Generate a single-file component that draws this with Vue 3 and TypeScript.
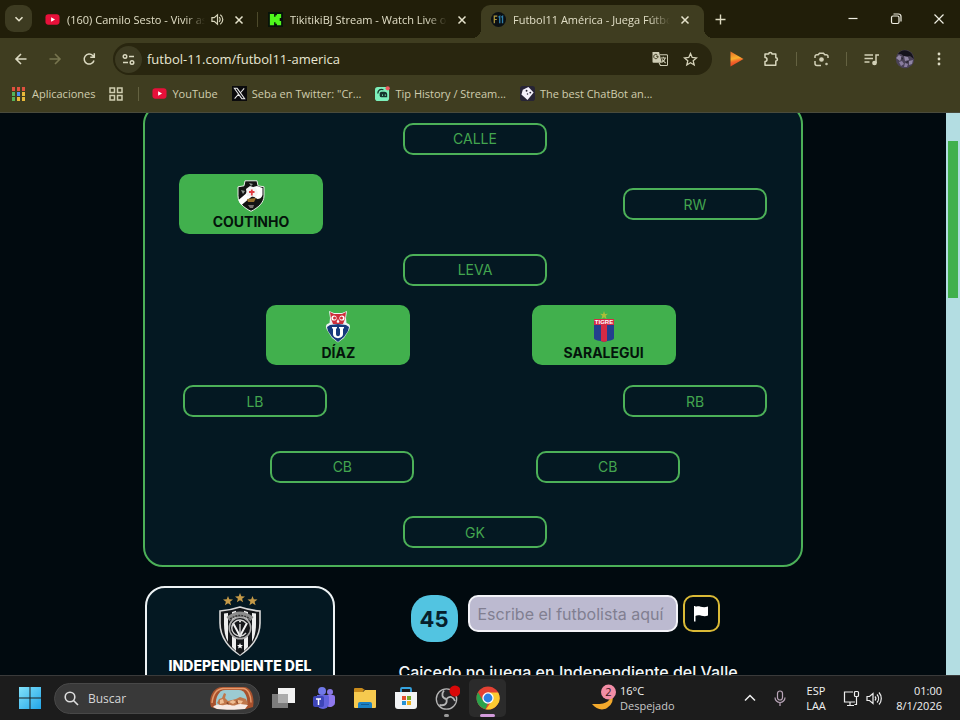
<script setup lang="ts">
import { ref } from 'vue'

interface Slot {
  label: string
  crest?: 'vasco' | 'uchile' | 'tigre'
}
interface Row {
  spread: 'single' | 'wide' | 'narrow'
  slots: Slot[]
}
interface Tab {
  title: string
  icon: 'youtube' | 'kick' | 'f11'
  audio?: boolean
  active?: boolean
}
interface Bookmark {
  label: string
  icon: 'youtube' | 'x' | 'tip' | 'dice'
}

const rows: Row[] = [
  { spread: 'single', slots: [{ label: 'CALLE' }] },
  { spread: 'wide', slots: [{ label: 'COUTINHO', crest: 'vasco' }, { label: 'RW' }] },
  { spread: 'single', slots: [{ label: 'LEVA' }] },
  { spread: 'narrow', slots: [{ label: 'DÍAZ', crest: 'uchile' }, { label: 'SARALEGUI', crest: 'tigre' }] },
  { spread: 'wide', slots: [{ label: 'LB' }, { label: 'RB' }] },
  { spread: 'narrow', slots: [{ label: 'CB' }, { label: 'CB' }] },
  { spread: 'single', slots: [{ label: 'GK' }] },
]

const tabs: Tab[] = [
  { title: '(160) Camilo Sesto - Vivir as', icon: 'youtube', audio: true },
  { title: 'TikitikiBJ Stream - Watch Live on', icon: 'kick' },
  { title: 'Futbol11 América - Juega Fútbo', icon: 'f11', active: true },
]

const bookmarks: Bookmark[] = [
  { label: 'YouTube', icon: 'youtube' },
  { label: 'Seba en Twitter: "Cr...', icon: 'x' },
  { label: 'Tip History / Stream...', icon: 'tip' },
  { label: 'The best ChatBot an...', icon: 'dice' },
]

const appColors = ['#e0513f', '#e0513f', '#e0513f', '#53b35a', '#4b8df0', '#e8b93a', '#53b35a', '#e8b93a', '#e8b93a']
const player = ref('')
const search = ref('')
const url = ref('futbol-11.com/futbol11-america')
</script>

<template>
  <div class="desktop">
    <header class="browser">
      <div class="tabstrip">
        <button class="tab-search" aria-label="Buscar pestañas">
          <svg width="10" height="10" viewBox="0 0 10 10"><path d="M1.500 3.200 5 6.700l3.500-3.500" fill="none" stroke="#e6e3cc" stroke-width="1.600" /></svg>
        </button>
        <div v-for="tab in tabs" :key="tab.title" class="tab" :class="{ active: tab.active }">
          <svg v-if="tab.icon === 'youtube'" class="favicon" viewBox="0 0 16 16">
            <rect x="0.500" y="2.500" width="15" height="11" rx="3" fill="#e8103a" /><path d="M6.500 5.500v5l4.200-2.500z" fill="#fff" />
          </svg>
          <svg v-else-if="tab.icon === 'kick'" class="favicon" viewBox="0 0 16 16">
            <rect width="16" height="16" fill="#07130a" /><path d="M2 2h4.500v3H8V3.500h1.500V2H14v4.500h-1.500V9.500H14V14H9.500v-1.500H8V11H6.500v3H2z" fill="#4ff81c" />
          </svg>
          <svg v-else class="favicon" viewBox="0 0 16 16">
            <circle cx="8" cy="8" r="8" fill="#0b1014" />
            <path d="M3.500 12V4.500h3.200M3.500 8h2.700" fill="none" stroke="#b09a3e" stroke-width="1.300" />
            <path d="M8 5.500 9.300 4.500V12M11 5.500l1.300-1V12" fill="none" stroke="#2f7fa8" stroke-width="1.400" />
          </svg>
          <span class="tab-title">{{ tab.title }}</span>
          <svg v-if="tab.audio" class="audio" viewBox="0 0 14 14" fill="none" stroke="#d8d5bb" stroke-width="1.300">
            <path d="M1 5h2.500L7 2v10L3.500 9H1z" /><path d="M8.800 4.500a3.500 3.500 0 0 1 0 5M10 2a6 6 0 0 1 0 10" />
          </svg>
          <button class="close" aria-label="Cerrar pestaña">
            <svg width="10" height="10" viewBox="0 0 10 10"><path d="m1.500 1.500 7 7m0-7-7 7" stroke="#e6e3cc" stroke-width="1.500" /></svg>
          </button>
        </div>
        <button class="new-tab" aria-label="Nueva pestaña">
          <svg width="11" height="11" viewBox="0 0 11 11"><path d="M5.500.5v10M.5 5.500h10" stroke="#dedbc2" stroke-width="1.400" /></svg>
        </button>
        <div class="window-controls">
          <button aria-label="Minimizar"><svg width="12" height="12" viewBox="0 0 12 12"><path d="M1.500 5.500h9" stroke="#efeee2" stroke-width="1.200" /></svg></button>
          <button aria-label="Restaurar"><svg width="12" height="12" viewBox="0 0 12 12" fill="none" stroke="#efeee2" stroke-width="1.200"><rect x="1.500" y="3" width="7.500" height="7.500" rx="1.500" /><path d="M3.500 1h5A2.500 2.500 0 0 1 11 3.500v5" /></svg></button>
          <button aria-label="Cerrar"><svg width="12" height="12" viewBox="0 0 12 12"><path d="m1.500 1.500 9 9m0-9-9 9" stroke="#efeee2" stroke-width="1.200" /></svg></button>
        </div>
      </div>

      <div class="toolbar">
        <button class="tool" aria-label="Atrás"><svg width="14" height="14" viewBox="0 0 14 14" fill="none" stroke="#dcdac2" stroke-width="1.600"><path d="M12.500 7H2M7 2 2 7l5 5" /></svg></button>
        <button class="tool" aria-label="Adelante"><svg width="14" height="14" viewBox="0 0 14 14" fill="none" stroke="#77754f" stroke-width="1.600"><path d="M1.500 7H12M7 2l5 5-5 5" /></svg></button>
        <button class="tool" aria-label="Recargar"><svg width="14" height="14" viewBox="0 0 14 14" fill="none" stroke="#dcdac2" stroke-width="1.500"><path d="M12 8.500A5 5 0 1 1 10.800 3.600L12 5M12.300 1.300v4H8.300" /></svg></button>
        <div class="omnibox">
          <button class="site-info" aria-label="Información del sitio">
            <svg width="13" height="13" viewBox="0 0 13 13" fill="none" stroke="#dcdac2" stroke-width="1.400"><circle cx="3" cy="3.500" r="1.800" /><path d="M7 3.500h5M1 9.500h5" /><circle cx="10" cy="9.500" r="1.800" /></svg>
          </button>
          <input v-model="url" aria-label="Dirección" />
          <button class="pill-icon" aria-label="Traducir">
            <svg width="16" height="16" viewBox="0 0 17 16">
              <path d="M1 .5h6.500L10.500 12H1.500A1 1 0 0 1 .5 11V1z" fill="#cfcdb5" />
              <path d="M6.500 5H4.300M6.400 5A2.300 2.300 0 1 1 5.500 3.500" fill="none" stroke="#343114" stroke-width="1" />
              <path d="M8.500 3.500h7a1 1 0 0 1 1 1V14a1 1 0 0 1-1 1H9L7.500 12M9.500 7h5.500M12 5.500V7M14 7c-.5 2-2 3.500-3.500 4.500M10.500 8.500l4 4" fill="none" stroke="#cfcdb5" stroke-width="1.100" />
            </svg>
          </button>
          <button class="pill-icon" aria-label="Favorito">
            <svg width="15" height="15" viewBox="0 0 15 15"><path d="m7.500 1.500 1.700 4 4.300.4-3.300 2.900 1 4.200-3.700-2.200L3.800 13l1-4.200L1.500 5.900l4.300-.4z" fill="none" stroke="#d5d2b9" stroke-width="1.300" /></svg>
          </button>
        </div>
        <button class="tool" aria-label="Extensión de video">
          <svg width="14" height="16" viewBox="0 0 14 16"><defs><linearGradient id="vid" x1="0.300" y1="0" x2="0.500" y2="1"><stop offset="0" stop-color="#e8702a" /><stop offset="0.450" stop-color="#fbb02c" /><stop offset="0.650" stop-color="#f2662a" /><stop offset="1" stop-color="#e23c22" /></linearGradient></defs><path d="M.5.500 13.500 8 .5 15.500z" fill="url(#vid)" /></svg>
        </button>
        <button class="tool" aria-label="Extensiones">
          <svg width="16" height="16" viewBox="0 0 16 16"><path d="M2 3h3.700a1.600 1.600 0 0 1 3.200 0h3.900v3.700a1.600 1.600 0 0 1 0 3.200v4.300H2V10.500a2 2 0 0 0 0-4z" fill="none" stroke="#d8d6bc" stroke-width="1.500" stroke-linejoin="round" /></svg>
        </button>
        <i class="divider"></i>
        <button class="tool" aria-label="Lens">
          <svg width="15" height="15" viewBox="0 0 15 15" fill="none" stroke="#d3d1b7" stroke-width="1.500"><path d="M1 6V4.500A1.800 1.800 0 0 1 2.800 2.700h1.400L5.500 1.200h4l1.300 1.500h1.400A1.800 1.800 0 0 1 14 4.500V6M1 9v2.500a2 2 0 0 0 2 2h4" /><circle cx="7.500" cy="7.500" r="1.600" fill="#d3d1b7" /><circle cx="12.500" cy="12" r=".5" /></svg>
        </button>
        <i class="divider"></i>
        <button class="tool" aria-label="Control de medios">
          <svg width="15" height="13" viewBox="0 0 15 13" fill="none" stroke="#d3d1b7" stroke-width="1.500"><path d="M.5 2h8.500M.5 5.500h8.500M.5 9h5M12 10V2h3" /><circle cx="10.500" cy="10" r="1.600" fill="#d3d1b7" /></svg>
        </button>
        <button class="tool" aria-label="Perfil">
          <svg width="20" height="20" viewBox="0 0 20 20">
            <circle cx="10" cy="10" r="9.200" fill="#4a4256" /><path d="M3 5c3-5 10-5 14 0l2 5-4-3-5 1-4-3z" fill="#15131c" />
            <path d="m1 9 3-3 3 2-2 4zM9 7l4 1 1 3-4 1zM14 12l4-1-1 4-3 1z" fill="#9085a3" /><path d="m6 8 2 1-1 2zM12 12l2 1-3 1z" fill="#201c29" /><path d="m4 13 3-1 2 3-3 2zM10 14l3 1-1 3-3 0z" fill="#8a7da0" />
          </svg>
        </button>
        <button class="tool" aria-label="Menú"><svg width="4" height="14" viewBox="0 0 4 14" fill="#dcdac2"><circle cx="2" cy="2" r="1.400" /><circle cx="2" cy="7" r="1.400" /><circle cx="2" cy="12" r="1.400" /></svg></button>
      </div>

      <nav class="bookmarks">
        <a href="#" class="bookmark apps">
          <svg width="14" height="14" viewBox="0 0 14 14"><rect v-for="(c, i) in appColors" :key="i" :x="(i % 3) * 5" :y="Math.floor(i / 3) * 5" width="3" height="4" :fill="c" /></svg>
          Aplicaciones
        </a>
        <a href="#" class="bookmark grid-link" aria-label="Grupos">
          <svg width="14" height="14" viewBox="0 0 14 14" fill="none" stroke="#cfcdb0" stroke-width="1.500"><path d="M1 1h4.500v4.500H1zM8.500 1H13v4.500H8.500zM1 8.500h4.500V13H1zM8.500 8.500H13V13H8.500z" /></svg>
        </a>
        <i class="divider"></i>
        <a v-for="b in bookmarks" :key="b.label" href="#" class="bookmark">
          <svg v-if="b.icon === 'youtube'" class="favicon" viewBox="0 0 16 16"><rect x="0.500" y="2.500" width="15" height="11" rx="3" fill="#e8103a" /><path d="M6.500 5.500v5l4.200-2.500z" fill="#fff" /></svg>
          <svg v-else-if="b.icon === 'x'" class="favicon" viewBox="0 0 16 16"><rect width="16" height="16" fill="#0a0a0c" /><path d="M2.500 2.500h3l8 11h-3zM13 2.500 9 7.200M6.800 9 2.800 13.500" fill="none" stroke="#e8e8e8" stroke-width="1.100" /></svg>
          <svg v-else-if="b.icon === 'tip'" class="favicon" viewBox="0 0 16 16"><rect y="1" width="15" height="15" rx="3" fill="#7df0bb" /><path d="M3 8c0-4 3-5 6-4" fill="none" stroke="#16352d" stroke-width="1.400" /><path d="M5 8q0-2 2-2h3q3 0 3 3v3H7q-2 0-2-2z" fill="#16352d" /><path d="M8 9v1.500M11 9v1.500" stroke="#7df0bb" /><circle cx="13.500" cy="2.500" r="2.300" fill="#ee5960" /></svg>
          <svg v-else class="favicon" viewBox="0 0 16 16"><rect width="16" height="16" rx="3" fill="#272435" /><path d="m9 1 5.500 6L8 15 1.500 9 3 4z" fill="#f4f1fb" /><g fill="#272435"><circle cx="7" cy="5" r="1" /><circle cx="11" cy="7" r="1" /><circle cx="8" cy="8.500" r=".8" /></g></svg>
          {{ b.label }}
        </a>
      </nav>
    </header>

    <div class="viewport">
      <main class="page">
        <section class="pitch">
          <div v-for="(row, r) in rows" :key="r" class="row" :class="row.spread">
            <button v-for="(slot, s) in row.slots" :key="s" class="slot" :class="{ filled: slot.crest }">
              <svg v-if="slot.crest === 'vasco'" class="crest" viewBox="0 0 28 32">
                <path d="M8 .8h12l1 5 6 1v9c0 7-6 12-13 15.500C7 27.800 1 22.800 1 15.800v-9l6-1z" fill="#131313" stroke="#e8f0e8" stroke-width="1" />
                <path d="m20 6 5.500 2v7c-1 3-3 4-5 4l-5-3-5 4-6 5c-2-2-3-4-3-5l7-6 4-6z" fill="#fff" />
                <path d="m9 9 4-3 6 2 2 5-2 4-9-1z" fill="#f4f4f4" /><path d="M12 12h5.500M14.800 9.500v6" stroke="#e13b42" stroke-width="1.800" />
                <path d="m10 19 9-1-2 4h-6z" fill="#98712e" /><path d="m11 25 2 3h3l1-3z" fill="#77706e" /><path d="m4 10 4 1-2 3zM12 3l4 1-2 2z" fill="#8d9690" />
              </svg>
              <svg v-else-if="slot.crest === 'uchile'" class="crest" viewBox="0 0 28 32">
                <path d="M5 0 10 2h8l5-2-1 7 .5 5C26 13 27 15 25 19l-5 8-6 4.500L8 27l-5-8c-2-4-1-6 2.500-7L6 7z" fill="#eef2f4" />
                <path d="m6 1 4 2h8l4-2-1 7-2 5H9L7 8z" fill="#ce2e3b" /><circle cx="10" cy="7" r="2.600" fill="#fff" /><circle cx="18" cy="7" r="2.600" fill="#fff" />
                <circle cx="10.500" cy="7" r="1.500" fill="#ce2e3b" /><circle cx="17.500" cy="7" r="1.500" fill="#ce2e3b" /><path d="m14 8 1.500 3-1.500 1-1.500-1z" fill="#fff" />
                <path d="m6 14 8-1 8 1 3 2-1 4-4 6-6 5-6-5-4-6-1-4z" fill="#173a7c" /><path d="M8 16h5v1.500h-1V23c0 3 4 3 4 0v-5.500h-1V16h5v1.500h-1V23c0 5.500-10 5.500-10 0v-5.500H8z" fill="#fff" />
              </svg>
              <svg v-else-if="slot.crest === 'tigre'" class="crest" viewBox="0 0 28 32">
                <path d="m14 0 1 3 3-.2-2.300 2L16.500 8 14 6.200 11.500 8l.8-3.200-2.300-2 3 .2z" fill="#aabd38" />
                <path d="M4 9h20v18c0 3-6 2-10 4-4-2-10-1-10-4z" fill="#233f8e" /><path d="M11 14h6v16l-3 1-3-1z" fill="#d62a45" /><path d="M4 8h20v6H4z" fill="#d62a45" />
                <text x="14" y="13" text-anchor="middle" font-family="Liberation Sans, sans-serif" font-size="6" font-weight="700" fill="#fff">TIGRE</text>
              </svg>
              <span>{{ slot.label }}</span>
            </button>
          </div>
        </section>

        <section class="play">
          <article class="club">
            <svg class="club-crest" viewBox="0 0 44 65">
              <g fill="#c59a48"><path d="m22 0 1.300 3.300 3.700.2-2.900 2.200 1 3.600L22 7.200l-3.100 2.100 1-3.600L17 3.500l3.700-.2z" /><path d="m10 3 1.300 3.300 3.700.2-2.900 2.200 1 3.600-3.100-2.100-3.100 2.100 1-3.600L5 6.500l3.700-.2z" /><path d="m34.500 3 1.300 3.300 3.700.2-2.900 2.200 1 3.600-3.100-2.100-3.100 2.100 1-3.600-2.900-2.200 3.700-.2z" /></g>
              <path d="M2 18c7-.5 14-2 20-4 6 2 13 3.500 20 4v12c0 15-10 26-20 32C12 56 2 45 2 30z" fill="#15171a" stroke="#dadada" stroke-width="1.600" />
              <path d="M6 20.500 10 20v29c-3-5-4-12-4-18zM14 19l4-1.300V58l-4-4zM26 17.700l4 1.300v35l-4 4zM34 20l4 .5V31c0 6-1 13-4 18z" fill="#eee" />
              <path d="M10 26q12-10 24 0" fill="none" stroke="#8c8c8c" stroke-width="5" /><path d="M12 26q10-7 20 0" fill="none" stroke="#333" stroke-width="1.500" stroke-dasharray="2 1" />
              <circle cx="22" cy="35" r="11.500" fill="#aaa" /><circle cx="22" cy="35" r="10" fill="#15171a" />
              <path d="m15 30 7 13 7-13" fill="none" stroke="#f2f2f2" stroke-width="2" /><path d="M22 31v11M28 40a8 8 0 1 1 0-10" fill="none" stroke="#d5d5d5" stroke-width="1.400" /><circle cx="22" cy="28.500" r="1" fill="#eee" />
              <path d="M18 49h8v9l-4 4-4-4z" fill="#15171a" /><path d="m22 50 .8 2h2.200l-1.700 1.400.7 2.200-2-1.200-2 1.200.7-2.200L19 52h2.200z" fill="#fff" />
            </svg>
            <h2>INDEPENDIENTE DEL VALLE</h2>
          </article>
          <div class="guess">
            <form class="guess-row" @submit.prevent>
              <output class="timer">45</output>
              <input v-model="player" class="player" placeholder="Escribe el futbolista aquí" aria-label="Futbolista" />
              <button class="flag" type="button" aria-label="Rendirse">
                <svg width="16" height="17" viewBox="0 0 16 17"><path d="M1 1h1.500v15.500H1z" fill="#fff" /><path d="M2 2c4-2 7 1.500 13-.5v9C10 12.500 7 9 2 11z" fill="#fff" /></svg>
              </button>
            </form>
            <p class="message">Caicedo no juega en Independiente del Valle</p>
          </div>
        </section>
      </main>
      <div class="scrollbar"><i></i></div>
    </div>

    <footer class="taskbar">
      <button class="start" aria-label="Inicio">
        <svg width="22" height="22" viewBox="0 0 22 22"><defs><linearGradient id="win" x1="0" y1="0" x2="1" y2="1"><stop offset="0" stop-color="#82e2fb" /><stop offset="1" stop-color="#22a5e8" /></linearGradient></defs><path d="M0 0h10.500v10.500H0zM11.500 0H22v10.500H11.500zM0 11.500h10.500V22H0zM11.500 11.500H22V22H11.500z" fill="url(#win)" /></svg>
      </button>
      <label class="search">
        <svg width="15" height="15" viewBox="0 0 15 15" fill="none" stroke="#dedede" stroke-width="1.600"><circle cx="6" cy="6" r="4.800" /><path d="m9.500 9.500 4.500 4.500" /></svg>
        <input v-model="search" placeholder="Buscar" aria-label="Buscar" />
        <svg width="46" height="24" viewBox="0 0 46 24">
          <path d="M2 21C-1 12 4 1 13 1h22c7 0 11 10 9 20l-7 2H8z" fill="#a8512d" /><path d="M3 17C4 8 8 3 14 2.500h20c5 0 8 7 8 14" fill="none" stroke="#e59a6c" stroke-width="1.500" />
          <path d="M7 19c-1-7 3-15 9-15h14c6 0 9 8 8 14l-5 3H12z" fill="#9ccbd2" /><path d="m8 17 2-4 3-1 2-5 2 1-1 4 3 3 8-2 4-2 6 2 2 5-8 3H13z" fill="#c0764a" /><path d="m11 14 3-1 1 4-4 1zM20 16l4-2 3 2-3 2zM29 14l5 1-2 3-3-1z" fill="#f0bd93" /><path d="m17 17 2-1 1 3zM27 14l1 4 1-1z" fill="#7d3d25" />
          <path d="M4 21c4-4 8-1 11-2 5-2 8 2 12 0 5-2 8 0 12 0l-3 4c-9 1-20 1-28 0z" fill="#f7e9e4" />
        </svg>
      </label>
      <button class="app" aria-label="Vista de tareas"><svg width="24" height="24" viewBox="0 0 24 24"><rect x="7" y="2" width="17" height="15" fill="#f2f2f2" /><rect x="1" y="8" width="16" height="14" fill="#7c7c7c" /><rect x="7" y="8" width="10" height="9" fill="#ababab" /></svg></button>
      <button class="app" aria-label="Teams">
        <svg width="24" height="24" viewBox="0 0 24 24"><circle cx="10" cy="5" r="4" fill="#7078e8" /><circle cx="18" cy="6" r="3" fill="#8a79e5" /><path d="M14 9h7q2 0 2 2v6a5 5 0 0 1-8 3z" fill="#8e78ed" /><path d="M5 9h10q2 0 2 2v6a6 6 0 0 1-12 0z" fill="#6263dd" /><rect x="1" y="10" width="11" height="11" rx="2" fill="#3d45b8" /><path d="M4 13h5M6.500 13v6" stroke="#fff" stroke-width="1.500" /></svg>
      </button>
      <button class="app" aria-label="Explorador de archivos">
        <svg width="24" height="24" viewBox="0 0 24 24"><path d="M1 3q0-1 1-1h7l3 2h-1L9 7H1z" fill="#c98b1b" /><path d="M1 6h9l2-2h11v17q0 1-1 1H2q-1 0-1-1z" fill="#f6ca4f" /><path d="M5 22v-4q0-2 2-2h10q2 0 2 2v4z" fill="#1b81c5" /><path d="M8 18h8v1H8z" fill="#145c91" /></svg>
      </button>
      <button class="app" aria-label="Microsoft Store">
        <svg width="24" height="24" viewBox="0 0 24 24"><path d="M7 6V3q0-1 1-1h8q1 0 1 1v3" fill="none" stroke="#35a3df" stroke-width="1.800" /><path d="M1 6h22v14q0 3-3 3H4q-3 0-3-3z" fill="#f2f4f5" /><path d="M8 10h4v4H8z" fill="#e2502f" /><path d="M13 10h4v4h-4z" fill="#77ac29" /><path d="M8 15h4v4H8z" fill="#2793d5" /><path d="M13 15h4v4h-4z" fill="#edb21f" /></svg>
      </button>
      <button class="app running" aria-label="OBS Studio">
        <svg width="26" height="26" viewBox="0 0 26 26"><circle cx="12.500" cy="14" r="10.200" fill="#252527" stroke="#b5b5b5" stroke-width="1.300" /><g fill="none" stroke="#b5b5b5" stroke-width="1.800"><path d="M12.500 14C8 13 7 9 10 5.500" /><path d="M12.500 14c3-4 7-2 8.500 2" /><path d="M12.500 14c1 5-2 7-7 6" /></g><circle cx="21" cy="6" r="5.500" fill="#d80808" /></svg>
      </button>
      <button class="app current" aria-label="Chrome">
        <svg width="24" height="24" viewBox="0 0 24 24"><circle cx="12" cy="12" r="11.500" fill="#e34133" /><path d="M2 6.300 7.200 15 12 17l-2.500 6.200A11.500 11.500 0 0 1 2 6.300z" fill="#2ba24c" /><path d="M12 6.500h10.200A11.500 11.500 0 0 1 9.800 23.300L16.700 14z" fill="#fcca31" /><circle cx="12" cy="12" r="5.700" fill="#fff" /><circle cx="12" cy="12" r="4.400" fill="#2c7fe4" /></svg>
      </button>
      <button class="weather">
        <svg width="26" height="28" viewBox="0 0 26 28"><path d="M18 9q5 12-17 11c4 5 10 7 15 4q8-5 5-15z" fill="#f2a92c" /><circle cx="17.500" cy="8" r="7.500" fill="#f28da5" /><text x="17.500" y="12" text-anchor="middle" font-family="Open Sans, sans-serif" font-size="11" fill="#35151e">2</text></svg>
        <span class="two-line"><span>16°C</span><span class="dim">Despejado</span></span>
      </button>
      <div class="tray">
        <button class="tray-icon" aria-label="Mostrar iconos ocultos"><svg width="12" height="8" viewBox="0 0 12 8"><path d="M1 6.500 6 1.500l5 5" fill="none" stroke="#eee" stroke-width="1.500" /></svg></button>
        <button class="tray-icon" aria-label="Micrófono"><svg width="12" height="16" viewBox="0 0 12 16" fill="none" stroke="#b9a5b8" stroke-width="1.200"><rect x="3.500" y="1" width="5" height="9" rx="2.500" /><path d="M1 7.500a5 5 0 0 0 10 0M6 12.500V16" /></svg></button>
        <button class="two-line lang"><span>ESP</span><span>LAA</span></button>
        <button class="status" aria-label="Red y volumen">
          <svg width="17" height="17" viewBox="0 0 17 17" fill="none" stroke="#eee" stroke-width="1.200"><path d="M10 2H1.500v10H12M4 15.500h7M7 12.500v3" /><rect x="11.500" y="1.500" width="4" height="5" rx="1" /><path d="M13.500 6.500v8h-2" /></svg>
          <svg width="17" height="17" viewBox="0 0 17 17" fill="none" stroke="#eee" stroke-width="1.200"><path d="M1 6.500h2.500L7 3.500v10l-3.500-3H1zM9 6.500a3 3 0 0 1 0 4M11 4.500a6 6 0 0 1 0 8M13 2.500a9 9 0 0 1 0 12" /></svg>
        </button>
        <button class="two-line clock"><span>01:00</span><span>8/1/2026</span></button>
      </div>
    </footer>
  </div>
</template>

<style>
html, body { margin: 0; background: #010a0f; }
</style>

<style scoped>
* { box-sizing: border-box; }
svg { display: block; flex: none; }
button, input { font: inherit; color: inherit; background: none; border: 0; padding: 0; margin: 0; min-width: 0; }
button { display: flex; align-items: center; justify-content: center; flex: none; }
input { outline: none; }
a { color: inherit; text-decoration: none; }

.desktop { display: flex; flex-direction: column; height: 100vh; overflow: hidden; font-family: "Open Sans", "Noto Sans", sans-serif; font-size: 11px; color: #e0ddc5; }

.browser { flex: none; background: #3f3d20; border-bottom: 1px solid #4a4b3c; }
.tabstrip { display: flex; height: 38px; background: #211e09; align-items: flex-start; }
.tab-search { width: 27px; height: 27px; margin: 5px 3px 0 5px; border-radius: 9px; background: #3d3b21; }
.tab { display: flex; align-items: center; flex: 0 1 223px; min-width: 0; height: 33px; margin-top: 5px; padding: 0 14px 4px 10px; border-radius: 9px 9px 0 0; position: relative; }
.tab:nth-of-type(1)::after { content: ""; position: absolute; right: 0; top: 7px; width: 1px; height: 15px; background: #4d4a2b; }
.tab.active { background: #3f3d20; }
.tab.active::before, .tab.active::after { content: ""; position: absolute; bottom: 0; width: 9px; height: 9px; }
.tab.active::before { left: -9px; background: radial-gradient(circle at 0 0, #211e09 9px, #3f3d20 9px); }
.tab.active::after { right: -9px; background: radial-gradient(circle at 100% 0, #211e09 9px, #3f3d20 9px); }
.favicon { width: 15px; height: 15px; }
.tab-title { flex: 1; min-width: 0; margin: 0 10px 0 7px; white-space: nowrap; overflow: hidden; mask-image: linear-gradient(90deg, #000 calc(100% - 20px), transparent); }
.audio { width: 13px; height: 13px; margin-left: -4px; margin-right: 10px; }
.close { width: 10px; height: 16px; }
.new-tab { width: 28px; height: 28px; margin: 5px 0 0 2px; }
.window-controls { display: flex; margin-left: auto; }
.window-controls button { width: 43px; height: 38px; }

.toolbar { display: flex; align-items: center; height: 42px; padding: 0 4px; }
.tool { width: 34px; height: 32px; }
.omnibox { flex: 1; min-width: 0; display: flex; align-items: center; height: 32px; margin: 0 8px 0 7px; padding: 0 7px 0 2px; border-radius: 16px; background: #29260f; }
.site-info { width: 27px; height: 27px; border-radius: 50%; background: #3d3b22; }
.omnibox input { flex: 1; margin-left: 5px; font-size: 13px; color: #e8e6d3; }
.pill-icon { width: 30px; height: 28px; }
.divider { flex: none; width: 16px; height: 14px; background: linear-gradient(#646241, #646241) center / 1px 100% no-repeat; }

.bookmarks { display: flex; align-items: center; height: 32px; padding: 0 12px 5px; }
.bookmark { display: flex; align-items: center; gap: 5px; margin-right: 14px; white-space: nowrap; color: #d0cdae; }
.apps { gap: 6px; }
.grid-link { margin-right: 7px; }
.bookmarks .divider { margin-right: 6px; }

.viewport { flex: 1; min-height: 0; display: flex; overflow: hidden; background: #010a0f; }
.page { flex: 1; min-width: 0; overflow: hidden; font-family: Inter, sans-serif; }
.pitch { display: grid; grid-template-rows: repeat(7, 1fr); width: min(100%, 660px); height: 463px; margin: -9px auto 0; padding-left: 4px; border: 2px solid #4cb058; border-radius: 20px; background: #041822; }
.row { display: flex; align-items: center; justify-content: center; }
.row.wide { justify-content: space-between; padding: 0 34px; }
.row.narrow { justify-content: space-evenly; }
.slot { width: 144px; height: 32px; border: 2px solid #4cb058; border-radius: 10px; font-size: 14px; color: #43a54f; }
.slot.filled { flex-direction: column; height: 60px; margin: 0 4px 0 -4px; border: 0; background: #41b04d; color: #04140b; font-weight: 700; line-height: 20px; padding-top: 3px; }
.crest { width: 28px; height: 32px; }

.play { display: flex; width: min(100%, 656px); margin: 19px auto 0; }
.club { flex: none; width: 190px; height: 130px; padding-top: 5px; border: 2px solid #edf2f4; border-radius: 20px; background: #041822; }
.club-crest { width: 44px; height: 65px; margin: 0 auto; }
.club h2 { margin: 0; padding: 0 12px; font-size: 14px; line-height: 15px; font-weight: 800; color: #fff; text-align: center; }
.guess { flex: 1; min-width: 0; display: flex; flex-direction: column; align-items: center; }
.guess-row { display: flex; align-items: flex-start; margin-top: 9px; padding-right: 6px; }
.timer { display: flex; align-items: center; justify-content: center; width: 47px; height: 47px; margin-right: 10px; border-radius: 20px; background: #52c4e1; color: #06202c; font-size: 22px; font-weight: 700; }
.player { width: 210px; height: 37px; padding: 0 8px; border: 2px solid #f3f3f8; border-radius: 10px; background: #bcbad0; color: #222; font-size: 16px; }
.player::placeholder { color: #817f91; opacity: 1; }
.flag { width: 37px; height: 37px; margin-left: 5px; border: 2px solid #d9b936; border-radius: 10px; }
.message { margin: 18px 0 0; font-size: 16px; line-height: 24px; font-weight: 500; color: #f2f5f6; white-space: nowrap; }

.scrollbar { flex: none; width: 14px; display: grid; grid-template-rows: 5fr 28fr 67fr; padding: 0 2px; background: #b3dde2; }
.scrollbar i { grid-row: 2; background: #41b04d; }

.taskbar { flex: none; display: flex; align-items: center; height: 45px; padding: 0 10px; background: #1c1c1c; border-top: 1px solid #3a3a3a; color: #f2f2f2; }
.start { width: 40px; height: 40px; }
.search { flex: none; display: flex; align-items: center; width: 206px; height: 31px; margin: 0 2px 0 4px; padding: 0 4px 0 9px; border: 1px solid #484848; border-radius: 16px; background: #393939; }
.search input { flex: 1; margin-left: 9px; font-size: 12px; }
.search input::placeholder { color: #d6d6d6; opacity: 1; }
.app { position: relative; width: 37px; height: 38px; margin: 0 2px; border-radius: 5px; }
.app.current { background: #2b2b2b; }
.app.current::after, .app.running::after { content: ""; position: absolute; bottom: 0; width: 15px; height: 3px; border-radius: 2px; background: #d39bdc; }
.app.running::after { width: 5px; background: #9a9a9a; }
.weather { margin-left: 83px; gap: 3px; }
.two-line { display: flex; flex-direction: column; align-items: flex-start; line-height: 15px; }
.dim { color: #c9c9c9; }
.tray { display: flex; align-items: center; margin-left: auto; }
.tray-icon { width: 30px; height: 38px; }
.lang { align-items: center; width: 42px; }
.status { gap: 6px; width: 50px; height: 38px; margin-left: 1px; }
.clock { align-items: flex-end; width: 54px; margin-right: 8px; }
</style>
